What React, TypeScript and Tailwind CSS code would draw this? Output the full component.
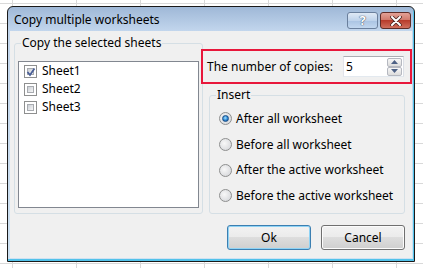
import React from "react";

const font = { fontFamily: '"Noto Sans", "Open Sans", sans-serif' };

function CheckBox({ checked }: { checked?: boolean }) {
  return (
    <div className="relative h-[13px] w-[13px] border border-[#8e8f8f] bg-white p-[2px]">
      <div className="h-full w-full border border-[#a8abb0] bg-[linear-gradient(135deg,#cbcfd5,#f6f6f6)]" />
      {checked && (
        <svg className="absolute left-[1px] top-[1px]" width="10" height="10" viewBox="0 0 10 10">
          <path d="M1.5 5 L4 8 L8.5 1.5" fill="none" stroke="#4a5f97" strokeWidth="1.8" />
        </svg>
      )}
    </div>
  );
}

function Radio({ checked }: { checked?: boolean }) {
  return (
    <div className="flex h-[13px] w-[13px] items-center justify-center rounded-full border border-[#8e8f8f] bg-[radial-gradient(circle_at_40%_40%,#f8f8f8,#d0d2d6)]">
      {checked && (
        <div className="h-[7px] w-[7px] rounded-full border border-[#1c4f86] bg-[radial-gradient(circle_at_45%_40%,#a6e4ff,#2a85d4_55%,#0f3f7c)]" />
      )}
    </div>
  );
}

function Arrow({ up }: { up?: boolean }) {
  return (
    <svg width="7" height="4" viewBox="0 0 7 4">
      <path d={up ? "M0 4 L3.5 0 L7 4 Z" : "M0 0 L3.5 4 L7 0 Z"} fill="#4d6185" />
    </svg>
  );
}

export default function App() {
  const sheets = [
    { name: "Sheet1", checked: true },
    { name: "Sheet2", checked: false },
    { name: "Sheet3", checked: false },
  ];
  const options = [
    "After all worksheet",
    "Before all worksheet",
    "After the active worksheet",
    "Before the active worksheet",
  ];

  return (
    <div
      style={font}
      className="h-[268px] w-[423px] overflow-hidden bg-white bg-[linear-gradient(to_right,#d9d9d9_1px,transparent_1px),linear-gradient(to_bottom,#d9d9d9_1px,transparent_1px)] bg-[size:64px_20px] bg-[position:12px_3px] pl-[7px] pt-[6px] text-[12px] text-black"
    >
      <div className="flex h-[256px] w-[408px] flex-col rounded-t-[6px] border border-[#1a1a1a] bg-[linear-gradient(to_bottom,#9fb8d7,#c2d6ed_24px,#cfe2f2)] shadow-[inset_-1px_-2px_0_#52c2ea]">
        {/* title bar */}
        <div className="flex h-[24px] items-start">
          <span className="ml-[6px] mt-[5px] leading-[16px]">Copy multiple worksheets</span>
          <div className="ml-auto mr-[3px] mt-[5px] flex gap-[2px]">
            <div className="flex h-[17px] w-[31px] items-center justify-center rounded-[3px] border border-[#6a7f9c] bg-[linear-gradient(to_bottom,#dfe9f5,#bfd3eb_50%,#a9c3e2_51%,#c2d7ef)] text-[13px] font-bold leading-none text-white [text-shadow:0_0_1px_#30405a,0_0_1px_#30405a]">
              ?
            </div>
            <div className="flex h-[17px] w-[31px] items-center justify-center rounded-[3px] border border-[#5e2c27] bg-[linear-gradient(to_bottom,#e3a196,#d17b6d_45%,#b83c2c_50%,#cf6f5d)]">
              <svg width="12" height="10" viewBox="0 0 12 10">
                <path d="M2 1 L10 9 M10 1 L2 9" stroke="#4a2420" strokeWidth="3.6" strokeLinecap="round" />
                <path d="M2 1 L10 9 M10 1 L2 9" stroke="#ffffff" strokeWidth="2" strokeLinecap="round" />
              </svg>
            </div>
          </div>
        </div>

        {/* client area */}
        <div className="mx-[2px] mb-[3px] flex flex-1 flex-col bg-[#f0f0f0] pl-[4px] pt-[4px]">
          <div className="flex items-start">
            <fieldset className="h-[179px] w-[190px] rounded-[3px] border border-[#d5dfe5]">
              <legend className="ml-[6px] px-[1px] leading-[16px]">Copy the selected sheets</legend>
              <div className="ml-[3px] mt-[10px] h-[147px] w-[181px] border border-[#828790] bg-white pl-[5px]">
                {sheets.map((s) => (
                  <div key={s.name} className="flex h-[18px] items-center gap-[5px]">
                    <CheckBox checked={s.checked} />
                    <span className="leading-[16px]">{s.name}</span>
                  </div>
                ))}
              </div>
            </fieldset>

            <div className="flex flex-col">
              <div className="ml-[-2px] mt-[14px] flex h-[35px] w-[211px] items-center border-2 border-[#e8173b] pl-[4px]">
                <span className="leading-[16px]">The number of copies:</span>
                <div className="ml-auto mr-[6px] flex h-[21px] w-[61px] items-center border border-[#abadb3] border-b-[#e3e9ef] border-l-[#e2e3ea] border-r-[#dbdfe6] bg-white">
                  <span className="pl-[2px] leading-[16px]">5</span>
                  <div className="ml-auto mr-[1px] flex flex-col">
                    <div className="flex h-[9px] w-[15px] items-center justify-center rounded-[2px] border border-[#b5b8c0] bg-[linear-gradient(to_bottom,#f7f7f7,#dcdcdc)]">
                      <Arrow up />
                    </div>
                    <div className="flex h-[9px] w-[15px] items-center justify-center rounded-[2px] border border-[#b5b8c0] bg-[linear-gradient(to_bottom,#f7f7f7,#dcdcdc)]">
                      <Arrow />
                    </div>
                  </div>
                </div>
              </div>

              <fieldset className="ml-[6px] mt-[3px] h-[127px] w-[196px] rounded-[3px] border border-[#d5dfe5]">
                <legend className="ml-[6px] px-[1px] leading-[16px]">Insert</legend>
                <div className="ml-[9px] mt-[3px] flex flex-col">
                  {options.map((o, i) => (
                    <div key={o} className="flex h-[25.7px] items-center gap-[4px]">
                      <Radio checked={i === 0} />
                      <span className="leading-[16px]">{o}</span>
                    </div>
                  ))}
                </div>
              </fieldset>
            </div>
          </div>

          <div className="mt-[11px] flex justify-end gap-[10px] pr-[7px]">
            <button className="h-[25px] w-[84px] rounded-[3px] border border-[#3c7fb1] bg-[linear-gradient(to_bottom,#f2f2f2,#ebebeb_50%,#dddddd_50%,#cfcfcf)] leading-[16px] shadow-[inset_0_0_0_1px_#8fd3f5]">
              Ok
            </button>
            <button className="h-[25px] w-[84px] rounded-[3px] border border-[#707070] bg-[linear-gradient(to_bottom,#f2f2f2,#ebebeb_50%,#dddddd_50%,#cfcfcf)] leading-[16px] shadow-[inset_0_0_0_1px_#fcfcfc]">
              Cancel
            </button>
          </div>
        </div>
      </div>
    </div>
  );
}
